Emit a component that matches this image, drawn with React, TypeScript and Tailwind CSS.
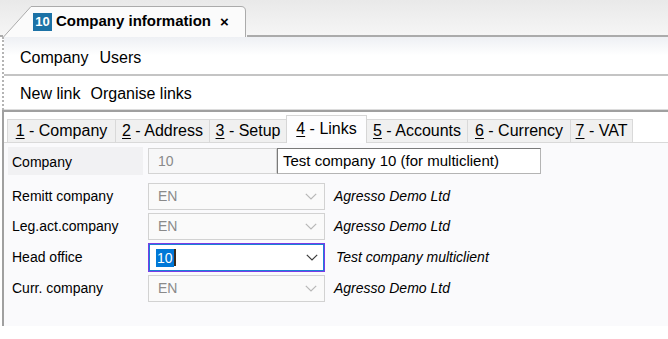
import React from 'react';

const Chevron = ({ active }: { active?: boolean }) => (
  <svg width="12" height="7" viewBox="0 0 12 7" className="shrink-0">
    <polyline points="0.8,0.8 6,6 11.2,0.8" fill="none" stroke={active ? '#3c3c3c' : '#b8b8b8'} strokeWidth="1.2" />
  </svg>
);

const tabs = [
  { n: '1', label: 'Company', w: 'w-[109px]' },
  { n: '2', label: 'Address', w: 'w-[95px]' },
  { n: '3', label: 'Setup', w: 'w-[78px]' },
  { n: '4', label: 'Links', w: 'w-[81px]', active: true },
  { n: '5', label: 'Accounts', w: 'w-[102px]' },
  { n: '6', label: 'Currency', w: 'w-[104px]' },
  { n: '7', label: 'VAT', w: 'w-[63px]' },
];

const links = [
  { label: 'Remitt company', value: 'EN', desc: 'Agresso Demo Ltd' },
  { label: 'Leg.act.company', value: 'EN', desc: 'Agresso Demo Ltd' },
  { label: 'Head office', value: '10', desc: 'Test company multiclient', focused: true },
  { label: 'Curr. company', value: 'EN', desc: 'Agresso Demo Ltd' },
];

const App: React.FC = () => {
  return (
    <div className="w-[668px] h-[339px] bg-white overflow-hidden font-['Liberation_Sans',Arial,sans-serif] text-black">
      {/* Document tab strip */}
      <div className="flex items-end h-[37px] bg-gradient-to-b from-[#e9e9e9] to-[#f6f6f6]">
        <div className="w-[3px] h-full border-b-2 border-[#ababab]" />
        <div className="relative w-[244px] h-[32px] flex items-center pl-[30px] pt-[1px]">
          <svg className="absolute inset-0" width="244" height="32" viewBox="0 0 244 32">
            <path d="M0.5,32 L28,1.5 H238 Q242.5,1.5 242.5,6 V32" fill="#fbfbfb" stroke="#ababab" strokeWidth="1" />
          </svg>
          <span className="relative flex items-center justify-center w-[19px] h-[18px] bg-[#1c72a6] text-white text-[13px] font-bold">10</span>
          <span className="relative ml-[4px] text-[15px] font-bold">Company information</span>
          <span className="relative ml-[9px] text-[15px] font-bold leading-none">×</span>
        </div>
        <div className="flex-1 h-full border-b-2 border-[#ababab]" />
      </div>

      {/* Toolbars */}
      <div className="ml-[2px] border-l-2 border-dotted border-[#b4b4b4]">
        <div className="h-[39px] flex items-center gap-[11px] pl-[16px] pt-[4px] text-[16px] border-b-2 border-[#c4c4c4] bg-gradient-to-b from-[#eef0f4] via-white to-white">
          <span>Company</span>
          <span>Users</span>
        </div>
        <div className="h-[34px] flex items-center gap-[10px] pl-[16px] pt-[2px] text-[16px] border-b border-[#dcdcdc]">
          <span>New link</span>
          <span>Organise links</span>
        </div>
      </div>

      {/* Detail frame */}
      <div className="ml-[2px] h-[216px] border-l-2 border-t-2 border-[#a0a0a0]">
        <div className="h-[30px] flex items-end pl-[3px] bg-white">
          {tabs.map((t) =>
            t.active ? (
              <div
                key={t.n}
                className={`${t.w} h-[28px] -mb-px -ml-px relative z-10 flex items-center justify-center pb-[2px] text-[16px] bg-[#fdfdfe] border border-b-0 border-[#d6d6d6]`}
              >
                <span>
                  <span className="underline underline-offset-2">{t.n}</span> - {t.label}
                </span>
              </div>
            ) : (
              <div
                key={t.n}
                className={`${t.w} h-[23px] -ml-px first:ml-0 flex items-center justify-center text-[16px] bg-[#f0f0f0] border border-b-0 border-[#d9d9d9]`}
              >
                <span>
                  <span className="underline underline-offset-2">{t.n}</span> - {t.label}
                </span>
              </div>
            )
          )}
        </div>

        <div className="h-[184px] bg-[#fafafc] border-t border-[#d9d9d9] pt-[5px] pl-[4px]">
          {/* Company row */}
          <div className="flex h-[26px] items-stretch">
            <div className="w-[135px] -mt-[1px] h-[28px] pl-[4px] pt-[2px] flex items-center text-[14px] bg-[#f1f1f3]">Company</div>
            <div className="ml-[5px] w-[129px] flex items-center pl-[9px] text-[14px] text-[#8a8a8a] bg-[#f7f7f8] border border-[#d4d4d4]">10</div>
            <div className="w-[264px] flex items-center pl-[5px] text-[15px] bg-white border border-[#7a7a7a] border-r-[#b4b4b4] border-b-[#b4b4b4]">
              Test company 10 (for multiclient)
            </div>
          </div>

          {/* Link rows */}
          <div className="mt-[9px] flex flex-col gap-[3px]">
            {links.map((r) => (
              <div key={r.label} className="flex items-center">
                <div className="w-[135px] pl-[4px] text-[14px]">{r.label}</div>
                {r.focused ? (
                  <div className="ml-[5px] w-[177px] h-[29px] flex items-center justify-between pl-[7px] pr-[6px] bg-white border border-[#7a3ce6] shadow-[inset_0_0_0_1px_#1b7fd6]">
                    <span className="flex items-center">
                      <span className="bg-[#0078d7] text-white text-[14px] leading-[18px] px-px">10</span>
                      <span className="w-[2px] h-[17px] bg-[#3a2a1a]" />
                    </span>
                    <Chevron active />
                  </div>
                ) : (
                  <div className="ml-[5px] w-[177px] h-[27px] flex items-center justify-between pl-[9px] pr-[7px] bg-[#fafafa] border border-[#d2d2d2]">
                    <span className="text-[14px] text-[#8a8a8a]">{r.value}</span>
                    <Chevron />
                  </div>
                )}
                <span className={`${r.focused ? 'ml-[11px]' : 'ml-[9px]'} text-[14px] italic`}>{r.desc}</span>
              </div>
            ))}
          </div>
        </div>
      </div>
    </div>
  );
};

export default App;
